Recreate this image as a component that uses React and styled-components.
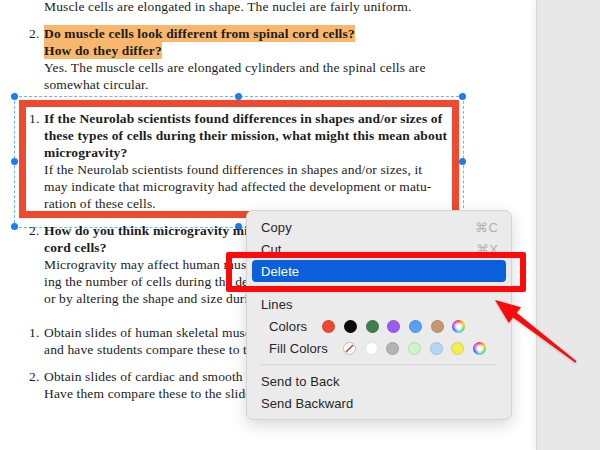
import React from 'react';
import styled, { createGlobalStyle } from 'styled-components';

const PAGE_WIDTH = 536;
const TEXT_COLOR = '#1c1c1c';
const HIGHLIGHT = '#f8b76c';
const FRAME_RED = '#ee4a2f';
const MARK_RED = '#ff0a0a';
const SELECT_BLUE = '#1b7cf4';
const MENU_BLUE = '#0b5fdb';

const GlobalStyle = createGlobalStyle`
    html, body {
        margin: 0;
        padding: 0;
        background: #ffffff;
    }
    body {
        width: 600px;
        height: 450px;
        overflow: hidden;
    }
`;

const sections = [
    [
        {
            number: '',
            lines: [{ text: 'Muscle cells are elongated in shape. The nuclei are fairly uniform.' }],
        },
        {
            number: '2.',
            lines: [
                { text: 'Do muscle cells look different from spinal cord cells?', bold: true, mark: true },
                { text: 'How do they differ?', bold: true, mark: true },
                { text: 'Yes. The muscle cells are elongated cylinders and the spinal cells are' },
                { text: 'somewhat circular.' },
            ],
        },
    ],
    [
        {
            number: '1.',
            selected: true,
            lines: [
                { text: 'If the Neurolab scientists found differences in shapes and/or sizes of', bold: true },
                { text: 'these types of cells during their mission, what might this mean about', bold: true },
                { text: 'microgravity?', bold: true },
                { text: 'If the Neurolab scientists found differences in shapes and/or sizes, it' },
                { text: 'may indicate that microgravity had affected the development or matu-' },
                { text: 'ration of these cells.' },
            ],
        },
        {
            number: '2.',
            lines: [
                { text: 'How do you think microgravity might affect muscle and spinal', bold: true },
                { text: 'cord cells?', bold: true },
                { text: 'Microgravity may affect human muscle development by reduc-' },
                { text: 'ing the number of cells during the development process' },
                { text: 'or by altering the shape and size during development.' },
            ],
        },
    ],
    [
        {
            number: '1.',
            lines: [
                { text: 'Obtain slides of human skeletal muscle and spinal cord cells' },
                { text: 'and have students compare these to the Neurolab images.' },
            ],
        },
        {
            number: '2.',
            lines: [
                { text: 'Obtain slides of cardiac and smooth muscle cells.' },
                { text: 'Have them compare these to the slides of skeletal muscle.' },
            ],
        },
    ],
];

const menuColors = ['#ec4a30', '#0a0a0a', '#3f7d4d', '#9a5cf1', '#5b9ff0', '#c69672', 'wheel'];
const menuFills = ['none', '#ffffff', '#b4b4b4', '#ccf4c8', '#b6d4f8', '#f2ee50', 'wheel'];
const handleSpots = [
    ['0%', '0%'], ['50%', '0%'], ['100%', '0%'],
    ['0%', '50%'], ['100%', '50%'],
    ['0%', '100%'], ['50%', '100%'], ['100%', '100%'],
];

function ListItem({ item }) {
    return (
        <Item>
            <Num>{item.number}</Num>
            <Body>
                {item.lines.map(line => (
                    <Line key={line.text} $bold={line.bold}>
                        {line.mark ? <Mark>{line.text}</Mark> : line.text}
                    </Line>
                ))}
            </Body>
            {item.selected && (
                <>
                    <Selection>
                        {handleSpots.map(([x, y]) => (
                            <Handle key={x + y} style={{ left: x, top: y }} />
                        ))}
                    </Selection>
                    <Frame />
                </>
            )}
        </Item>
    );
}

function Swatch({ color }) {
    if (color === 'none') {
        return (
            <NoneSwatch>
                <svg width="13" height="13" viewBox="0 0 13 13">
                    <line x1="3" y1="10" x2="10" y2="3" stroke="#e5322a" strokeWidth="1.4" />
                </svg>
            </NoneSwatch>
        );
    }
    if (color === 'wheel') {
        return <WheelSwatch />;
    }
    return <Dot $color={color} />;
}

export default function App() {
    return (
        <Screen>
            <GlobalStyle />
            <Page>
                <Column>
                    {sections.map((items, i) => (
                        <Section key={i}>
                            {items.map((item, j) => <ListItem key={j} item={item} />)}
                        </Section>
                    ))}
                </Column>
            </Page>
            <Sidebar />

            <Menu>
                <MenuItem>
                    <span>Copy</span>
                    <Shortcut>⌘C</Shortcut>
                </MenuItem>
                <MenuItem>
                    <span>Cut</span>
                    <Shortcut>⌘X</Shortcut>
                </MenuItem>
                <MenuItem $active>
                    <span>Delete</span>
                </MenuItem>
                <Separator />
                <MenuItem>
                    <span>Lines</span>
                </MenuItem>
                <SwatchRow>
                    <SwatchLabel>Colors</SwatchLabel>
                    <Swatches>
                        {menuColors.map(c => <Swatch key={c} color={c} />)}
                    </Swatches>
                </SwatchRow>
                <SwatchRow>
                    <SwatchLabel>Fill Colors</SwatchLabel>
                    <Swatches>
                        {menuFills.map(c => <Swatch key={c} color={c} />)}
                    </Swatches>
                </SwatchRow>
                <Separator />
                <MenuItem>
                    <span>Send to Back</span>
                </MenuItem>
                <MenuItem>
                    <span>Send Backward</span>
                </MenuItem>
            </Menu>

            <DeleteMark />

            <Arrow viewBox="480 290 110 80">
                <polygon
                    fill={MARK_RED}
                    points="495,300 521,307.3 516.7,312.8 576.6,361.2 575.4,362.8 513.1,317.6 508.8,323.1"
                />
            </Arrow>
        </Screen>
    );
}

const Screen = styled.div`
    position: relative;
    display: flex;
    width: 600px;
    height: 450px;
    overflow: hidden;
    background: #ffffff;
`;

const Page = styled.div`
    flex: 0 0 ${PAGE_WIDTH}px;
    box-sizing: border-box;
    padding-left: 29px;
    background: #ffffff;
    font-family: "Liberation Serif", "DejaVu Serif", serif;
    font-size: 13.5px;
    letter-spacing: 0.14px;
    line-height: 17px;
    color: ${TEXT_COLOR};
`;

const Column = styled.div`
    margin-top: -2px;
`;

const Sidebar = styled.div`
    flex: 1;
    background: #e8e8e8;
    border-left: 1px solid #d8d8d8;
    box-shadow: -3px 0 5px rgba(0, 0, 0, 0.05);
`;

const Section = styled.ol`
    list-style: none;
    margin: 0;
    padding: 0;

    & + & {
        margin-top: 17px;
    }
`;

const Item = styled.li`
    position: relative;
    display: flex;

    & + & {
        margin-top: 10px;
    }
`;

const Num = styled.span`
    flex: 0 0 15px;
`;

const Body = styled.div`
    display: flex;
    flex-direction: column;
`;

const Line = styled.div`
    white-space: nowrap;
    font-weight: ${props => props.$bold ? 700 : 400};
`;

const Mark = styled.span`
    display: inline-block;
    background: ${HIGHLIGHT};
`;

const Selection = styled.div`
    position: absolute;
    left: -15px;
    top: -14px;
    width: 450px;
    height: 132px;
    box-sizing: border-box;
    border: 1px dashed #6fb2ff;
`;

const Handle = styled.span`
    position: absolute;
    width: 7px;
    height: 7px;
    margin: -4px 0 0 -4px;
    border-radius: 50%;
    background: ${SELECT_BLUE};
`;

const Frame = styled.div`
    position: absolute;
    left: -10px;
    top: -10px;
    width: 440px;
    height: 118px;
    box-sizing: border-box;
    border: 7px solid ${FRAME_RED};
    box-shadow: 0 0 1px rgba(0, 0, 0, 0.2);
`;

const Menu = styled.div`
    position: absolute;
    left: 246px;
    top: 210px;
    width: 266px;
    box-sizing: border-box;
    padding: 5px 5px 5px;
    display: flex;
    flex-direction: column;
    background: #ebebeb;
    border: 1px solid #d3d3d3;
    border-radius: 7px;
    box-shadow: 0 5px 16px rgba(0, 0, 0, 0.16);
    font-family: "Liberation Sans", Arial, sans-serif;
    font-size: 13px;
    letter-spacing: 0.1px;
    color: #262626;
`;

const MenuItem = styled.div`
    height: 22px;
    display: flex;
    align-items: center;
    justify-content: space-between;
    padding: 0 8px 0 9px;
    border-radius: 4px;
    background: ${props => props.$active ? MENU_BLUE : 'transparent'};
    color: ${props => props.$active ? '#ffffff' : 'inherit'};
`;

const Shortcut = styled.span`
    color: #b2b2b2;
`;

const Separator = styled.div`
    height: 1px;
    margin: 5px 9px;
    background: #d4d4d4;
`;

const SwatchRow = styled.div`
    height: 22px;
    display: flex;
    align-items: center;
    padding-left: 17px;
`;

const SwatchLabel = styled.span`
    margin-right: 15px;
`;

const Swatches = styled.div`
    display: flex;
    align-items: center;
    gap: 8.7px;
`;

const Dot = styled.span`
    width: 13px;
    height: 13px;
    box-sizing: border-box;
    border-radius: 50%;
    background: ${props => props.$color};
    border: 1px solid rgba(0, 0, 0, 0.1);
`;

const NoneSwatch = styled.span`
    width: 13px;
    height: 13px;
    box-sizing: border-box;
    border-radius: 50%;
    background: #ffffff;
    border: 1px solid #bdbdbd;
    overflow: hidden;
    display: flex;
    align-items: center;
    justify-content: center;

    svg {
        flex: none;
    }
`;

const WheelSwatch = styled.span`
    width: 13px;
    height: 13px;
    border-radius: 50%;
    background:
        radial-gradient(circle, #ffffff 0 22%, rgba(255, 255, 255, 0) 62%),
        conic-gradient(#ff3b30, #ffcc00, #4cd964, #5ac8fa, #3b5bff, #c644fc, #ff3b30);
`;

const DeleteMark = styled.div`
    position: absolute;
    left: 226px;
    top: 252px;
    width: 300px;
    height: 40px;
    box-sizing: border-box;
    border: 6px solid ${MARK_RED};
    border-radius: 2px;
`;

const Arrow = styled.svg`
    position: absolute;
    left: 480px;
    top: 290px;
    width: 110px;
    height: 80px;
    filter: drop-shadow(0 1px 1px rgba(0, 0, 0, 0.2));
`;
